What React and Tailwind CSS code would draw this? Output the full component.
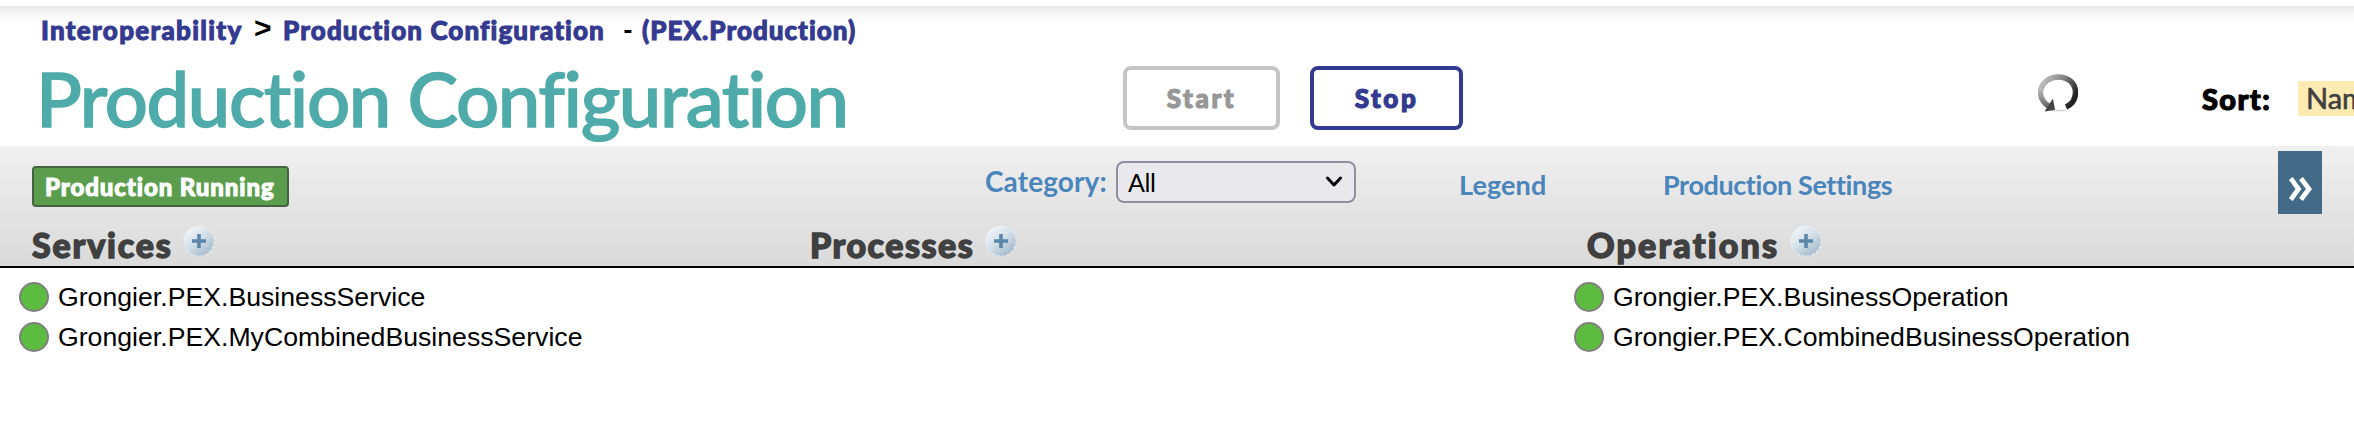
import React from "react";

function AddIcon() {
  return (
    <svg viewBox="0 0 32 32" className="mb-[5px] h-8 w-8 shrink-0">
      <defs>
        <linearGradient id="ball" x1="0.15" y1="0.1" x2="0.8" y2="0.95">
          <stop offset="0" stopColor="#f2f6f9" />
          <stop offset="0.45" stopColor="#d4e0e9" />
          <stop offset="1" stopColor="#a3bacb" />
        </linearGradient>
      </defs>
      <circle cx="16" cy="16" r="15.2" fill="url(#ball)" stroke="#e8ecef" strokeWidth="1.2" strokeDasharray="3 2" />
      <path d="M16 9v14M9 16h14" stroke="#4f7ea3" strokeWidth="3.6" opacity="0.9" />
    </svg>
  );
}

function RefreshIcon() {
  return (
    <svg viewBox="0 0 40 40" className="h-10 w-10 shrink-0">
      <defs>
        <linearGradient id="ring" x1="0" y1="0.1" x2="1" y2="0.6">
          <stop offset="0" stopColor="#c4c4c4" />
          <stop offset="0.5" stopColor="#858585" />
          <stop offset="1" stopColor="#222222" />
        </linearGradient>
        <linearGradient id="tail" x1="0" y1="0" x2="0" y2="1">
          <stop offset="0" stopColor="#c0c0c0" />
          <stop offset="1" stopColor="#666666" />
        </linearGradient>
      </defs>
      <path d="M28 34C34.500 31 37.500 26 37.500 19.500C37.500 10 30 4 20 4C12 4 5 8.500 3 16" fill="none" stroke="url(#ring)" strokeWidth="5.500" />
      <path d="M3 15C1 23 5 30 12 34" fill="none" stroke="url(#tail)" strokeWidth="5.500" />
      <path d="M15 25.500L17 37L6.500 38.500Z" fill="#454545" />
      <path d="M17 37.500H28" stroke="#d0d0d0" strokeWidth="1.500" />
    </svg>
  );
}

function Item({ name }) {
  return (
    <div className="flex h-10 items-center">
      <span className="h-[30px] w-[30px] shrink-0 rounded-full border-2 border-[#808080] bg-[#5cbc40]" />
      <span className="ml-[9px] whitespace-nowrap font-['Liberation_Sans',sans-serif] text-[26.67px] leading-10 text-black">{name}</span>
    </div>
  );
}

function Heading({ children, width }) {
  return (
    <>
      <h2 className={`${width} h-[46px] shrink-0 whitespace-nowrap text-[34px] font-black leading-[49px] text-[#404040] [-webkit-text-stroke:1.4px_#404040]`}>{children}</h2>
      <AddIcon />
    </>
  );
}

export default function App() {
  return (
    <div className="h-[444px] w-[2354px] overflow-hidden bg-white font-[Lato,sans-serif]">
      <div className="h-[6px]" />
      <header className="h-[140px] bg-[linear-gradient(to_bottom,#e8e8e8_0px,#f7f7f7_8px,#ffffff_18px)]">
        <nav className="flex h-10 items-start pl-[41px] pt-[8px] text-[26px] font-black leading-8 text-[#333a90]">
          <a className="w-[213px] shrink-0 whitespace-nowrap tracking-[1.3px] [-webkit-text-stroke:1px_#333a90]">Interoperability</a>
          <span className="w-[29px] shrink-0 font-['Liberation_Sans',sans-serif] text-[30px] font-bold leading-[27px] text-black">&gt;</span>
          <a className="w-[340px] shrink-0 whitespace-nowrap tracking-[1.1px] [-webkit-text-stroke:1px_#333a90]">Production Configuration</a>
          <span className="w-[19px] shrink-0 text-black">-</span>
          <a className="whitespace-nowrap tracking-[1px] [-webkit-text-stroke:1px_#333a90]">(PEX.Production)</a>
        </nav>
        <div className="flex h-[100px] items-center">
          <h1 className="w-[1086px] shrink-0 whitespace-nowrap pl-[36px] pt-[3px] text-[76px] font-medium leading-[100px] tracking-[-1.45px] text-[#4eaba9] [-webkit-text-stroke:1.4px_#4eaba9]">Production Configuration</h1>
          <button className="ml-[37px] mt-1 h-16 w-[157px] shrink-0 rounded-lg border-4 border-[#c5c5c5] text-[26px] font-black leading-[54px] tracking-[2.6px] text-[#979797] [-webkit-text-stroke:1.2px_#979797]">Start</button>
          <button className="ml-[30px] mt-1 h-16 w-[153px] shrink-0 rounded-lg border-4 border-[#333a90] text-[26px] font-black leading-[54px] tracking-[2.6px] text-[#333a90] [-webkit-text-stroke:1.2px_#333a90]">Stop</button>
          <div className="-mt-[7px] ml-[575px] w-[164px] shrink-0"><RefreshIcon /></div>
          <span className="mt-1 w-[96px] shrink-0 whitespace-nowrap text-[29px] font-black leading-[35px] tracking-[1.4px] text-black [-webkit-text-stroke:1.2px_#000]">Sort:</span>
          <span className="mt-[5px] h-[35px] w-[90px] shrink-0 bg-[#feeab3] pl-[8px] text-[29px] leading-[34px] text-[#404040] [-webkit-text-stroke:0.6px_#404040]">Name</span>
        </div>
      </header>

      <section className="h-[122px] border-b-2 border-black bg-linear-to-b from-[#f0f0f0] to-[#dadada]">
        <div className="flex h-[74px] items-start">
          <div className="ml-8 mt-5 h-[41px] w-[257px] shrink-0 whitespace-nowrap rounded border-2 border-[#466340] bg-[#5b9d4c] pl-[11px] text-[24px] font-black leading-[37px] tracking-[0.9px] text-white [-webkit-text-stroke:1px_#fff]">Production Running</div>
          <label className="ml-[696px] mt-[16px] w-[131px] shrink-0 whitespace-nowrap text-[28px] font-bold leading-[38px] tracking-[0.1px] text-[#4a85bb]">Category:</label>
          <div className="mt-[15px] flex h-[42px] w-[240px] shrink-0 items-center justify-between rounded-lg border-2 border-[#8f8f9d] bg-[#e9e9ed] pl-[10px] pr-[12px] text-[25px] text-black">
            <span className="leading-[38px] tracking-[-0.4px]">All</span>
            <svg viewBox="0 0 16 12" className="h-3 w-4"><path d="M1.500 2L8 9L14.500 2" fill="none" stroke="#000" strokeWidth="3" strokeLinecap="round" strokeLinejoin="round" /></svg>
          </div>
          <a className="ml-[103px] mt-[18px] w-[204px] shrink-0 whitespace-nowrap text-[27px] font-bold leading-[42px] tracking-[0.1px] text-[#4a85bb]">Legend</a>
          <a className="mt-[18px] w-[615px] shrink-0 whitespace-nowrap text-[27px] font-bold leading-[42px] tracking-[-0.4px] text-[#4a85bb]">Production Settings</a>
          <button className="mt-[5px] flex h-[63px] w-[44px] shrink-0 items-start bg-[#436b88] pl-[11px] pt-[26px]">
            <svg viewBox="0 0 23 24" className="h-6 w-[23px]"><path d="M1.800 1.500L9.500 12L1.800 22.500M12 1.500L20 12L12 22.500" fill="none" stroke="#fff" strokeWidth="4.800" /></svg>
          </button>
        </div>
        <div className="flex h-[46px] items-center">
          <div className="flex w-[810px] shrink-0 items-center pl-[32px] tracking-[1.8px]"><Heading width="w-[151px]">Services</Heading></div>
          <div className="flex w-[777px] shrink-0 items-center tracking-[1.5px]"><Heading width="w-[175px]">Processes</Heading></div>
          <div className="flex items-center tracking-[2.2px]"><Heading width="w-[203px]">Operations</Heading></div>
        </div>
      </section>

      <main className="flex pt-[9px]">
        <div className="w-[1574px] shrink-0 pl-[19px]">
          <Item name="Grongier.PEX.BusinessService" />
          <Item name="Grongier.PEX.MyCombinedBusinessService" />
        </div>
        <div>
          <Item name="Grongier.PEX.BusinessOperation" />
          <Item name="Grongier.PEX.CombinedBusinessOperation" />
        </div>
      </main>
    </div>
  );
}
